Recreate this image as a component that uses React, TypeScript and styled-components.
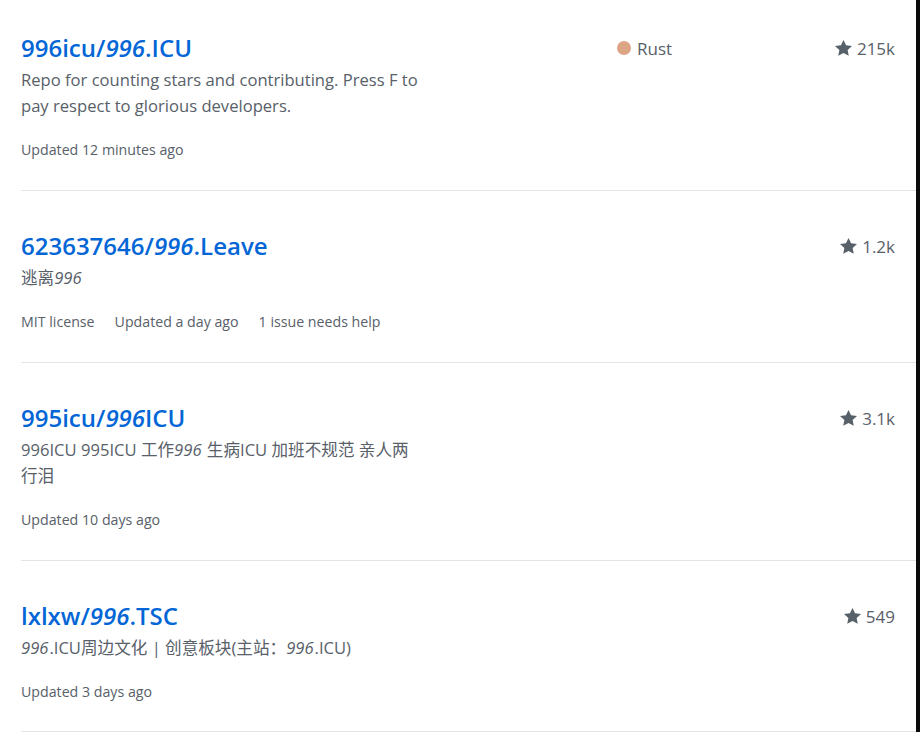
import React from 'react'
import styled, { createGlobalStyle } from 'styled-components'

const GlobalStyle = createGlobalStyle`
	html, body {
		margin: 0;
		padding: 0;
		background: #fff;
	}
	body {
		font-family: 'Open Sans', 'Noto Sans CJK SC', sans-serif;
		color: #586069;
	}
`

const Page = styled.div`
	width: 916px;
	height: 732px;
	overflow: hidden;
	border-right: 4px solid #0b0b0b;
	background: #fff;
`

const List = styled.ol`
	list-style: none;
	margin: -7px 0 0 21px;
	padding: 0;
`

const Item = styled.li`
	display: grid;
	grid-template-columns: 596px 1fr auto;
	align-items: start;
	padding: 37px 21px 30px 0;
	border-bottom: 1px solid #e1e4e8;

	&:last-child {
		padding-bottom: 29px;
	}
`

const Main = styled.div`
	display: flex;
	flex-direction: column;
`

const Title = styled.a`
	font-size: 24px;
	line-height: 36px;
	font-weight: 600;
	color: #0366d6;
	text-decoration: none;
	white-space: nowrap;
`

const Description = styled.p`
	margin: 1px 0 0;
	max-width: 401px;
	font-size: 16.6px;
	line-height: 26px;
	color: #586069;

	em {
		font-style: italic;
		margin-right: 1px;
	}
`

const Meta = styled.div`
	display: flex;
	gap: 20px;
	margin-top: 21px;
	font-size: 14.2px;
	line-height: 20px;
	color: #586069;
`

const Side = styled.div`
	display: flex;
	align-items: center;
	height: 36px;
	font-size: 17px;
	color: #586069;
`

const Language = styled(Side)`
	gap: 6px;
`

const Dot = styled.span<{ $color: string }>`
	width: 14px;
	height: 14px;
	border-radius: 50%;
	background: ${(p) => p.$color};
`

const Stars = styled(Side)`
	gap: 5px;
	justify-content: flex-end;

	svg {
		width: 17px;
		height: 18px;
		fill: #586069;
	}
`

const StarIcon = () => (
	<svg viewBox="0 0 14 14" aria-hidden="true">
		<path d="M14 5.4l-4.9-.64L7 .4 4.9 4.76 0 5.4l3.6 3.26L2.67 13.4 7 11.07l4.33 2.33-.93-4.74L14 5.4z" />
	</svg>
)

type Repo = {
	title: React.ReactNode
	description: React.ReactNode
	meta: string[]
	language?: { name: string; color: string }
	stars: string
}

const repos: Repo[] = [
	{
		title: (
			<>
				996icu/<em>996</em>.ICU
			</>
		),
		description:
			'Repo for counting stars and contributing. Press F to pay respect to glorious developers.',
		meta: ['Updated 12 minutes ago'],
		language: { name: 'Rust', color: '#dea584' },
		stars: '215k',
	},
	{
		title: (
			<>
				623637646/<em>996</em>.Leave
			</>
		),
		description: (
			<>
				逃离<em>996</em>
			</>
		),
		meta: ['MIT license', 'Updated a day ago', '1 issue needs help'],
		stars: '1.2k',
	},
	{
		title: (
			<>
				995icu/<em>996</em>ICU
			</>
		),
		description: (
			<>
				996ICU 995ICU 工作<em>996</em> 生病ICU 加班不规范 亲人两行泪
			</>
		),
		meta: ['Updated 10 days ago'],
		stars: '3.1k',
	},
	{
		title: (
			<>
				lxlxw/<em>996</em>.TSC
			</>
		),
		description: (
			<>
				<em>996</em>.ICU周边文化 | 创意板块(主站：<em>996</em>.ICU)
			</>
		),
		meta: ['Updated 3 days ago'],
		stars: '549',
	},
]

export default function App() {
	return (
		<Page>
			<GlobalStyle />
			<List>
				{repos.map((repo, i) => (
					<Item key={i}>
						<Main>
							<Title href="#">{repo.title}</Title>
							<Description>{repo.description}</Description>
							<Meta>
								{repo.meta.map((m) => (
									<span key={m}>{m}</span>
								))}
							</Meta>
						</Main>
						{repo.language ? (
							<Language>
								<Dot $color={repo.language.color} />
								{repo.language.name}
							</Language>
						) : (
							<span />
						)}
						<Stars>
							<StarIcon />
							{repo.stars}
						</Stars>
					</Item>
				))}
			</List>
		</Page>
	)
}
